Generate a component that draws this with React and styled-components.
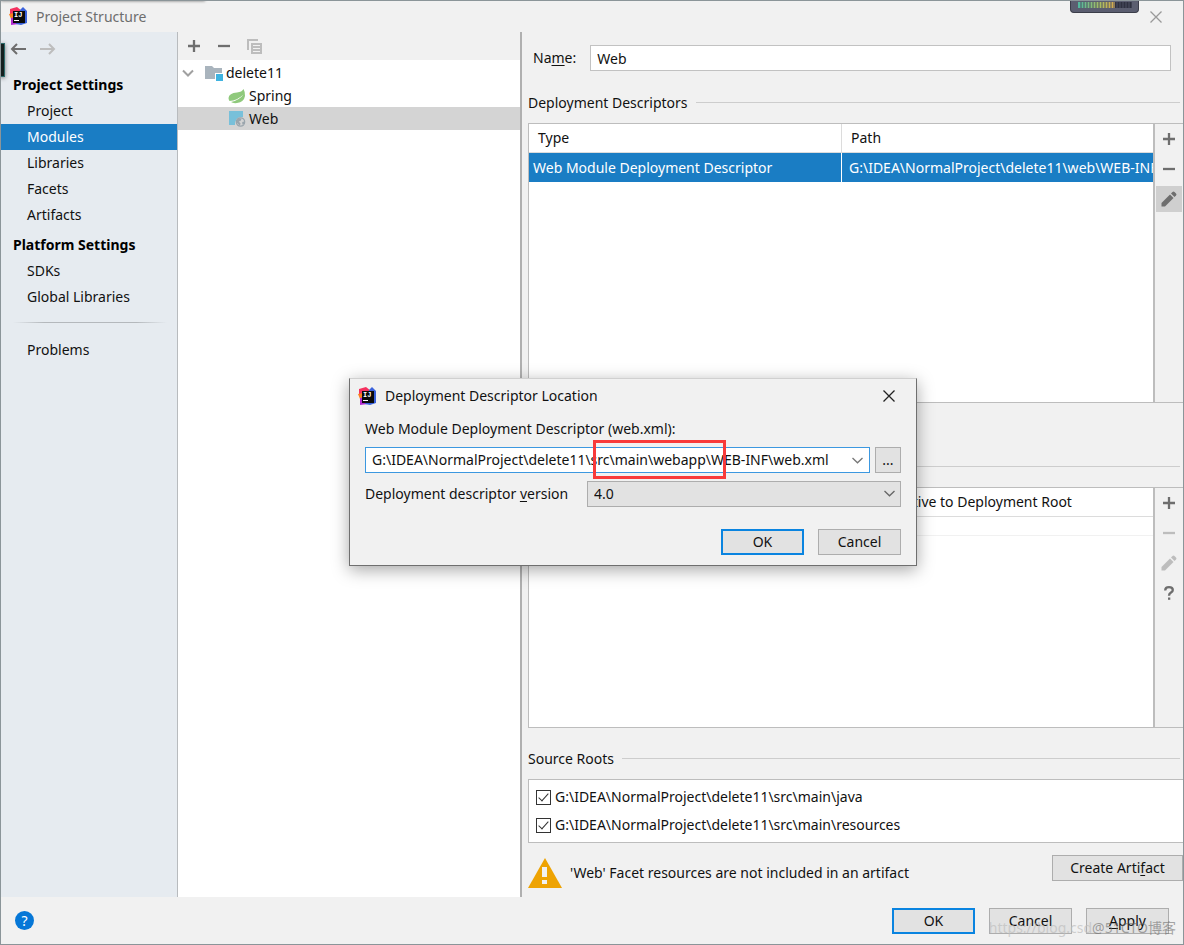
import { useState } from "react";
import styled, { createGlobalStyle } from "styled-components";

const NAV = [
  {
    title: "Project Settings",
    items: ["Project", "Modules", "Libraries", "Facets", "Artifacts"],
  },
  { title: "Platform Settings", items: ["SDKs", "Global Libraries"] },
];

const SOURCE_ROOTS = [
  "G:\\IDEA\\NormalProject\\delete11\\src\\main\\java",
  "G:\\IDEA\\NormalProject\\delete11\\src\\main\\resources",
];

const IdeaLogo = () => (
  <svg width="19" height="19" viewBox="0 0 19 19" aria-hidden="true">
    <path d="M1 2 L8 0 L13 4 L5 12 L1 8 Z" fill="#f5315f" />
    <path d="M0 7 L5 6 L7 13 L2 12 Z" fill="#fc801d" />
    <path d="M2 11 L8 10 L10 17 L2 18 Z" fill="#b02bd0" />
    <path d="M11 3 L14 0 L18 4 L18 16 L12 18 L7 17 Z" fill="#3a62dc" />
    <rect x="4" y="4" width="12" height="12" fill="#0a0a0a" />
    <text
      x="5"
      y="10"
      fill="#fff"
      fontSize="7"
      fontWeight="700"
      fontFamily="Liberation Mono, monospace"
    >
      IJ
    </text>
    <rect x="5" y="13" width="5" height="1" fill="#fff" />
  </svg>
);

const CloseIcon = () => (
  <svg width="12" height="12" viewBox="0 0 12 12" aria-hidden="true">
    <path d="M0.5 0.5 L11.5 11.5 M11.5 0.5 L0.5 11.5" stroke="currentColor" strokeWidth="1.3" />
  </svg>
);

const ArrowIcon = ({ right }) => (
  <svg width="16" height="12" viewBox="0 0 16 12" fill="none" aria-hidden="true">
    <path
      d={right ? "M0 6 H14 M9 1 L14 6 L9 11" : "M16 6 H2 M7 1 L2 6 L7 11"}
      stroke="currentColor"
      strokeWidth="2"
    />
  </svg>
);

const PlusIcon = () => (
  <svg width="12" height="12" viewBox="0 0 12 12" aria-hidden="true">
    <path d="M0 6 H12 M6 0 V12" stroke="currentColor" strokeWidth="2.3" />
  </svg>
);

const MinusIcon = () => (
  <svg width="12" height="12" viewBox="0 0 12 12" aria-hidden="true">
    <path d="M0 6 H12" stroke="currentColor" strokeWidth="2.3" />
  </svg>
);

const CopyIcon = () => (
  <svg width="15" height="15" viewBox="0 0 15 15" fill="none" aria-hidden="true">
    <path d="M1 11 V1 H11" stroke="currentColor" strokeWidth="2" />
    <path
      fillRule="evenodd"
      d="M4 4 H15 V15 H4 Z M6 6 V7 H13 V6 Z M6 9 V10 H13 V9 Z M6 12 V13 H13 V12 Z"
      fill="currentColor"
    />
  </svg>
);

const PencilIcon = () => (
  <svg width="16" height="16" viewBox="0 0 16 16" aria-hidden="true">
    <path d="M0.5 15.5 V12 L9 3.5 L12.5 7 L4 15.5 Z" fill="currentColor" />
    <path
      d="M10 2.5 L11.5 1 Q12.5 0 13.5 1 L15 2.5 Q16 3.5 15 4.5 L13.5 6 Z"
      fill="currentColor"
    />
  </svg>
);

const QuestionIcon = () => (
  <svg width="10" height="14" viewBox="0 0 10 14" fill="none" aria-hidden="true">
    <path
      d="M1.2 4.4 Q1.2 1.2 5 1.2 Q8.8 1.2 8.8 4 Q8.8 5.5 7 6.6 Q5 7.8 5 9.8"
      stroke="currentColor"
      strokeWidth="2.3"
    />
    <rect x="4" y="11.5" width="2.3" height="2.3" fill="currentColor" />
  </svg>
);

const ChevronIcon = () => (
  <svg width="11" height="7" viewBox="0 0 11 7" fill="none" aria-hidden="true">
    <path d="M0.5 1 L5.5 5.8 L10.5 1" stroke="currentColor" strokeWidth="1.3" />
  </svg>
);

const TreeChevron = () => (
  <svg width="12" height="8" viewBox="0 0 12 8" fill="none" aria-hidden="true">
    <path d="M1 1.5 L6 6.5 L11 1.5" stroke="#a0a0a0" strokeWidth="2" />
  </svg>
);

const ModuleIcon = () => (
  <svg width="18" height="18" viewBox="0 0 18 18" aria-hidden="true">
    <path d="M0 2 H7 L9 4 H17 V9 H10 V15 H0 Z" fill="#a9b4bd" />
    <rect x="11" y="10" width="7" height="7" fill="#3fb3e0" />
  </svg>
);

const SpringIcon = () => (
  <svg width="18" height="16" viewBox="0 0 18 16" aria-hidden="true">
    <path
      d="M15.5 1 Q14 4 9 4.5 Q1 5 0.5 10 Q0.5 11.5 1.5 13 Q9 12.5 15.5 6.5 Q11 12.5 3 14 Q5 15.5 9 15 Q16 14 17 8 Q17.3 4 15.5 1 Z"
      fill="#8fc97c"
    />
  </svg>
);

const WebIcon = () => (
  <svg width="18" height="17" viewBox="0 0 18 17" aria-hidden="true">
    <path d="M1 1 H15 V7 Q7 6 7 15 H1 Z" fill="#78c0da" />
    <circle cx="12.5" cy="12" r="4.2" fill="#d4d4d4" stroke="#9aa5ad" strokeWidth="1.2" />
    <path
      d="M8.8 10 L11.5 8.2 L13.5 9 L12.5 11 L10.8 11.6 L12.6 13.4 L11.8 15.8 L8.8 12.8 Z M14.2 12 L16.5 11.5 L16 14 L14.4 14.8 Z"
      fill="#9aa5ad"
    />
  </svg>
);

const WarningIcon = () => (
  <svg width="34" height="30" viewBox="0 0 34 30" aria-hidden="true">
    <path d="M17 0 L34 30 H0 Z" fill="#eea303" />
    <rect x="14" y="9" width="5" height="10" fill="#f1f1f1" />
    <rect x="14" y="22" width="5" height="4" fill="#f1f1f1" />
  </svg>
);

const LevelMeter = () => (
  <svg width="54" height="6" viewBox="0 0 54 6" aria-hidden="true">
    <defs>
      <linearGradient id="meter" x1="0" x2="1">
        <stop offset="0" stopColor="#4fb8a0" />
        <stop offset="0.6" stopColor="#a9bd62" />
        <stop offset="1" stopColor="#d9a94c" />
      </linearGradient>
    </defs>
    <rect width="37" height="6" fill="url(#meter)" />
    <rect x="37" width="17" height="6" fill="#2f3140" />
    <path d="M2.5 3 H54" stroke="#4d5062" strokeWidth="6" strokeDasharray="1 2" />
  </svg>
);

const DescriptorDialog = () => {
  const [path, setPath] = useState(
    "G:\\IDEA\\NormalProject\\delete11\\src\\main\\webapp\\WEB-INF\\web.xml"
  );

  return (
    <Dialog role="dialog" aria-labelledby="dialog-title">
      <DialogHeader>
        <IdeaLogo />
        <DialogTitle id="dialog-title">Deployment Descriptor Location</DialogTitle>
        <CloseButton type="button" aria-label="Close dialog">
          <CloseIcon />
        </CloseButton>
      </DialogHeader>
      <DialogBody>
        <label htmlFor="descriptor">Web Module Deployment Descriptor (web.xml):</label>
        <DialogRow>
          <Combo>
            <ComboInput
              id="descriptor"
              type="text"
              value={path}
              onChange={(e) => setPath(e.target.value)}
            />
            <ComboButton type="button" aria-label="Show paths">
              <ChevronIcon />
            </ComboButton>
            <Highlight />
          </Combo>
          <BrowseButton type="button">...</BrowseButton>
        </DialogRow>
        <DialogRow>
          <VersionLabel htmlFor="version">
            Deployment descriptor <u>v</u>ersion
          </VersionLabel>
          <SelectBox>
            <Select id="version" defaultValue="4.0">
              <option>4.0</option>
              <option>3.1</option>
            </Select>
            <SelectArrow>
              <ChevronIcon />
            </SelectArrow>
          </SelectBox>
        </DialogRow>
        <DialogActions>
          <Button type="button" $primary>
            OK
          </Button>
          <Button type="button">Cancel</Button>
        </DialogActions>
      </DialogBody>
    </Dialog>
  );
};

const App = () => {
  const [name, setName] = useState("Web");
  const [section, setSection] = useState("Modules");

  return (
    <>
      <GlobalStyle />
      <Window>
        <TitleBar>
          <IdeaLogo />
          <WindowTitle>Project Structure</WindowTitle>
          <CloseButton type="button" aria-label="Close" $muted>
            <CloseIcon />
          </CloseButton>
        </TitleBar>
        <Body>
          <Sidebar>
            <History>
              <IconButton type="button" aria-label="Back">
                <ArrowIcon />
              </IconButton>
              <IconButton type="button" aria-label="Forward" disabled>
                <ArrowIcon right />
              </IconButton>
            </History>
            {NAV.map((group) => (
              <NavGroup key={group.title}>
                <NavTitle>{group.title}</NavTitle>
                {group.items.map((item) => (
                  <NavItem
                    key={item}
                    type="button"
                    $active={item === section}
                    onClick={() => setSection(item)}
                  >
                    {item}
                  </NavItem>
                ))}
              </NavGroup>
            ))}
            <NavDivider />
            <NavItem
              type="button"
              $active={section === "Problems"}
              onClick={() => setSection("Problems")}
            >
              Problems
            </NavItem>
          </Sidebar>

          <TreePanel>
            <TreeToolbar>
              <IconButton type="button" aria-label="Add module">
                <PlusIcon />
              </IconButton>
              <IconButton type="button" aria-label="Remove module">
                <MinusIcon />
              </IconButton>
              <IconButton type="button" aria-label="Copy module" disabled>
                <CopyIcon />
              </IconButton>
            </TreeToolbar>
            <Tree>
              <TreeRow>
                <TreeChevron />
                <ModuleIcon />
                delete11
              </TreeRow>
              <TreeRow $child>
                <SpringIcon />
                Spring
              </TreeRow>
              <TreeRow $child $selected>
                <WebIcon />
                Web
              </TreeRow>
            </Tree>
          </TreePanel>

          <Content>
            <NameRow>
              <label htmlFor="name">
                Na<u>m</u>e:
              </label>
              <NameInput
                id="name"
                type="text"
                value={name}
                onChange={(e) => setName(e.target.value)}
              />
            </NameRow>

            <SectionTitle>Deployment Descriptors</SectionTitle>
            <TablePanel $grow={7}>
              <TableArea>
                <Table>
                  <thead>
                    <tr>
                      <Th>Type</Th>
                      <Th>Path</Th>
                    </tr>
                  </thead>
                  <tbody>
                    <tr>
                      <Td>Web Module Deployment Descriptor</Td>
                      <Td>G:\IDEA\NormalProject\delete11\web\WEB-INF\web.xml</Td>
                    </tr>
                  </tbody>
                </Table>
              </TableArea>
              <SideTools>
                <IconButton type="button" aria-label="Add descriptor">
                  <PlusIcon />
                </IconButton>
                <IconButton type="button" aria-label="Remove descriptor">
                  <MinusIcon />
                </IconButton>
                <IconButton type="button" aria-label="Edit descriptor" $pressed>
                  <PencilIcon />
                </IconButton>
              </SideTools>
            </TablePanel>

            <SectionTitle $spaced>Web Resource Directories</SectionTitle>
            <TablePanel $grow={6}>
              <TableArea>
                <Table>
                  <thead>
                    <tr>
                      <Th>Web Resource Directory</Th>
                      <Th>Path Relative to Deployment Root</Th>
                    </tr>
                  </thead>
                  <tbody>
                    <tr>
                      <EmptyTd colSpan={2} />
                    </tr>
                  </tbody>
                </Table>
              </TableArea>
              <SideTools>
                <IconButton type="button" aria-label="Add directory">
                  <PlusIcon />
                </IconButton>
                <IconButton type="button" aria-label="Remove directory" disabled>
                  <MinusIcon />
                </IconButton>
                <IconButton type="button" aria-label="Edit directory" disabled>
                  <PencilIcon />
                </IconButton>
                <IconButton type="button" aria-label="Directory help">
                  <QuestionIcon />
                </IconButton>
              </SideTools>
            </TablePanel>

            <SectionTitle>Source Roots</SectionTitle>
            <RootsList>
              {SOURCE_ROOTS.map((root) => (
                <RootLabel key={root}>
                  <Checkbox type="checkbox" defaultChecked />
                  {root}
                </RootLabel>
              ))}
            </RootsList>

            <WarningRow>
              <WarningIcon />
              <WarningText>'Web' Facet resources are not included in an artifact</WarningText>
              <Button type="button" $wide>
                <span>
                  Create Arti<u>f</u>act
                </span>
              </Button>
            </WarningRow>
          </Content>
        </Body>

        <Footer>
          <HelpButton type="button" aria-label="Help">
            ?
          </HelpButton>
          <Button type="button" $primary>
            OK
          </Button>
          <Button type="button">Cancel</Button>
          <Button type="button">
            <span>
              <u>A</u>pply
            </span>
          </Button>
        </Footer>

        <DescriptorDialog />
        <DockTab />
        <TopEdge />
        <MeterTab>
          <LevelMeter />
        </MeterTab>
        <Watermark>
          https://blog.csd<span>@51CTO博客</span>
        </Watermark>
      </Window>
    </>
  );
};

const GlobalStyle = createGlobalStyle`
  *, *::before, *::after {
    box-sizing: border-box;
  }

  body {
    margin: 0;
    background: #f1f1f1;
  }

  body, button, input, select {
    font-family: "Noto Sans", "Noto Sans CJK SC", sans-serif;
    font-size: 14px;
    line-height: 20px;
    color: #111;
  }

  u {
    text-underline-offset: 2px;
  }
`;

const Window = styled.div`
  position: relative;
  display: flex;
  flex-direction: column;
  min-height: 100vh;
  overflow: hidden;
  background: #f1f1f1;
  border: 1px solid #8b9599;
`;

const TitleBar = styled.header`
  display: flex;
  align-items: center;
  gap: 8px;
  height: 31px;
  padding: 0 21px 0 8px;
`;

const WindowTitle = styled.h1`
  flex: 1;
  margin: 0;
  font-size: 14px;
  font-weight: 400;
  color: #6e6e6e;
`;

const CloseButton = styled.button`
  display: grid;
  padding: 0;
  border: 0;
  background: none;
  color: ${(props) => (props.$muted ? "#999" : "#222")};
`;

const Body = styled.div`
  flex: 1;
  display: grid;
  grid-template-columns: 177px 344px minmax(0, 1fr);
`;

const IconButton = styled.button`
  display: grid;
  place-items: center;
  width: 26px;
  height: 26px;
  padding: 0;
  border: 0;
  background: ${(props) => (props.$pressed ? "#cfcfcf" : "none")};
  color: #6e6e6e;

  &:disabled {
    color: #bdbdbd;
  }
`;

const Sidebar = styled.nav`
  display: flex;
  flex-direction: column;
  background: #e6ebf0;
  border-right: 1px solid #b8bbbe;
`;

const History = styled.div`
  display: flex;
  gap: 4px;
  height: 40px;
  padding: 4px;
`;

const NavGroup = styled.section`
  display: flex;
  flex-direction: column;
  margin-bottom: 4px;
`;

const NavTitle = styled.h2`
  margin: 0;
  padding-left: 12px;
  font-size: 14px;
  font-weight: 700;
  line-height: 26px;
  color: #000;
`;

const NavItem = styled.button`
  height: 26px;
  padding: 0 0 0 26px;
  border: 0;
  text-align: left;
  background: ${(props) => (props.$active ? "#1a7dc4" : "none")};
  color: ${(props) => (props.$active ? "#fff" : "#111")};
`;

const NavDivider = styled.hr`
  width: 154px;
  height: 1px;
  margin: 8px 12px 14px;
  border: 0;
  background: linear-gradient(to right, transparent, #b4b8bc 20%, #b4b8bc 80%, transparent);
`;

const TreePanel = styled.section`
  background: #fff;
  border-right: 2px solid #b0b0b0;
`;

const TreeToolbar = styled.div`
  display: flex;
  align-items: center;
  gap: 4px;
  height: 28px;
  padding-left: 3px;
  background: #f1f1f1;
`;

const Tree = styled.ul`
  margin: 0;
  padding: 1px 0 0;
  list-style: none;
`;

const TreeRow = styled.li`
  display: flex;
  align-items: center;
  gap: 3px;
  height: 23px;
  padding-left: ${(props) => (props.$child ? "50px" : "4px")};
  background: ${(props) => (props.$selected ? "#d4d4d4" : "none")};

  svg + svg {
    margin-left: 8px;
  }
`;

const Content = styled.main`
  display: flex;
  flex-direction: column;
  padding-left: 6px;
`;

const NameRow = styled.div`
  display: flex;
  align-items: center;
  gap: 14px;
  padding: 13px 12px 1px 5px;
`;

const NameInput = styled.input`
  flex: 1;
  height: 26px;
  padding: 0 6px;
  border: 1px solid #c2c2c2;
  background: #fff;
`;

const SectionTitle = styled.h2`
  display: flex;
  align-items: center;
  gap: 8px;
  height: 51px;
  margin: ${(props) => (props.$spaced ? "33px 3px 0 0" : "0 3px 0 0")};
  padding-top: 10px;
  font-size: 14px;
  font-weight: 400;

  &::after {
    content: "";
    flex: 1;
    height: 1px;
    background: #cdcdcd;
  }
`;

const TablePanel = styled.div`
  flex: ${(props) => props.$grow} 0 0;
  display: flex;
  border: 1px solid #bdbdbd;
  border-right: 0;
`;

const TableArea = styled.div`
  flex: 1;
  min-width: 0;
  background: #fff;
`;

const Table = styled.table`
  width: 100%;
  table-layout: fixed;
  border-collapse: separate;
  border-spacing: 0;
`;

const Th = styled.th`
  height: 29px;
  padding: 0 9px;
  border-bottom: 1px solid #dcdcdc;
  text-align: left;
  font-weight: 400;
  white-space: nowrap;

  & + & {
    border-left: 1px solid #dcdcdc;
  }
`;

const Td = styled.td`
  height: 29px;
  padding: 0 0 0 4px;
  overflow: hidden;
  white-space: nowrap;
  background: #1a7dc4;
  color: #fff;

  & + & {
    padding-left: 7px;
    border-left: 1px solid #fff;
  }
`;

const EmptyTd = styled.td`
  height: 19px;
  border-bottom: 1px solid #f1f1f1;
`;

const SideTools = styled.div`
  display: flex;
  flex-direction: column;
  gap: 4px;
  padding: 2px 1px;
  border-left: 2px solid #bdbdbd;
`;

const RootsList = styled.div`
  display: flex;
  flex-direction: column;
  gap: 8px;
  padding: 7px;
  background: #fff;
  border: 1px solid #bdbdbd;
  border-right: 0;
`;

const RootLabel = styled.label`
  display: flex;
  align-items: center;
  gap: 4px;
`;

const Checkbox = styled.input`
  appearance: none;
  display: grid;
  place-items: center;
  width: 15px;
  height: 15px;
  margin: 0;
  border: 1px solid #333;
  background: #fff;

  &:checked::before {
    content: "";
    width: 5px;
    height: 10px;
    margin-bottom: 3px;
    border: solid #333;
    border-width: 0 1px 1px 0;
    transform: rotate(42deg);
  }
`;

const Button = styled.button`
  width: ${(props) => (props.$wide ? "131px" : "83px")};
  height: 26px;
  padding: 0;
  border: ${(props) => (props.$primary ? "2px solid #0a84e0" : "1px solid #adadad")};
  background: #e2e2e2;
`;

const WarningRow = styled.div`
  display: flex;
  align-items: center;
  gap: 8px;
  height: 54px;
  padding-top: 6px;

  ${Button} {
    align-self: flex-start;
    margin-top: 6px;
  }
`;

const WarningText = styled.p`
  flex: 1;
  margin: 0;
`;

const Footer = styled.footer`
  display: flex;
  align-items: center;
  gap: 14px;
  height: 47px;
  padding: 0 14px;
`;

const HelpButton = styled.button`
  width: 19px;
  height: 19px;
  margin-right: auto;
  padding: 0;
  border: 0;
  border-radius: 50%;
  background: #0677d7;
  color: #fff;
  line-height: 19px;
`;

/* dialog floating over the window */
const Dialog = styled.div`
  position: absolute;
  top: 377px;
  left: 348px;
  width: 568px;
  background: #f1f1f1;
  border: 1px solid #6f6f6f;
  border-top-color: #d0d0d0;
  box-shadow: 0 4px 16px rgba(0, 0, 0, 0.35);
`;

const DialogHeader = styled.div`
  display: flex;
  align-items: center;
  gap: 8px;
  height: 34px;
  padding: 0 21px 0 8px;
`;

const DialogTitle = styled.h2`
  flex: 1;
  margin: 0;
  font-size: 14px;
  font-weight: 400;
`;

const DialogBody = styled.div`
  display: flex;
  flex-direction: column;
  gap: 8px;
  padding: 6px 15px 10px;
`;

const DialogRow = styled.div`
  display: flex;
  align-items: center;
  gap: 5px;
`;

const Combo = styled.div`
  position: relative;
  flex: 1;
  display: flex;
  height: 26px;
  border: 1px solid #3c98e0;
  background: #fff;
`;

const ComboInput = styled.input`
  flex: 1;
  min-width: 0;
  padding: 0 0 0 6px;
  border: 0;
  outline: 0;
  background: none;
`;

const ComboButton = styled.button`
  display: grid;
  place-items: center;
  width: 24px;
  padding: 0;
  border: 0;
  background: none;
  color: #777;
`;

/* red marker around the part of the path to change */
const Highlight = styled.div`
  position: absolute;
  top: -8px;
  left: 227px;
  width: 133px;
  height: 39px;
  border: 3px solid #f83a3a;
  pointer-events: none;
`;

const BrowseButton = styled.button`
  width: 26px;
  height: 26px;
  padding: 0;
  border: 1px solid #adadad;
  background: #e2e2e2;
`;

const VersionLabel = styled.label`
  width: 217px;
`;

const SelectBox = styled.div`
  position: relative;
  flex: 1;
`;

const Select = styled.select`
  appearance: none;
  display: block;
  width: 100%;
  height: 26px;
  padding: 0 6px;
  border: 1px solid #adadad;
  border-radius: 0;
  background: #e2e2e2;
`;

const SelectArrow = styled.span`
  position: absolute;
  top: 9px;
  right: 6px;
  display: grid;
  color: #666;
  pointer-events: none;
`;

const DialogActions = styled.div`
  display: flex;
  justify-content: flex-end;
  gap: 14px;
  padding-top: 14px;
`;

/* desktop widgets that overlap the window edges */
const DockTab = styled.div`
  position: absolute;
  top: 42px;
  left: -1px;
  width: 5px;
  height: 34px;
  border: 1px solid #2c6b6b;
  border-left: 0;
  background: #14201f;
  box-shadow: 0 1px 4px rgba(0, 0, 0, 0.5);
`;

const TopEdge = styled.div`
  position: absolute;
  top: -3px;
  left: 0;
  width: 204px;
  height: 2px;
  background: #555;
  box-shadow: 0 1px 3px rgba(0, 0, 0, 0.6);
`;

const MeterTab = styled.div`
  position: absolute;
  top: -1px;
  right: 44px;
  display: grid;
  place-items: center;
  width: 69px;
  height: 13px;
  padding-bottom: 3px;
  border: 1px solid #3b3d49;
  border-top: 0;
  border-radius: 0 0 4px 4px;
  background: #5b5e70;
`;

const Watermark = styled.div`
  position: absolute;
  right: 7px;
  bottom: 6px;
  color: rgba(190, 190, 190, 0.7);
  white-space: nowrap;
  pointer-events: none;

  span {
    color: rgba(110, 110, 110, 0.6);
  }
`;

export default App;
